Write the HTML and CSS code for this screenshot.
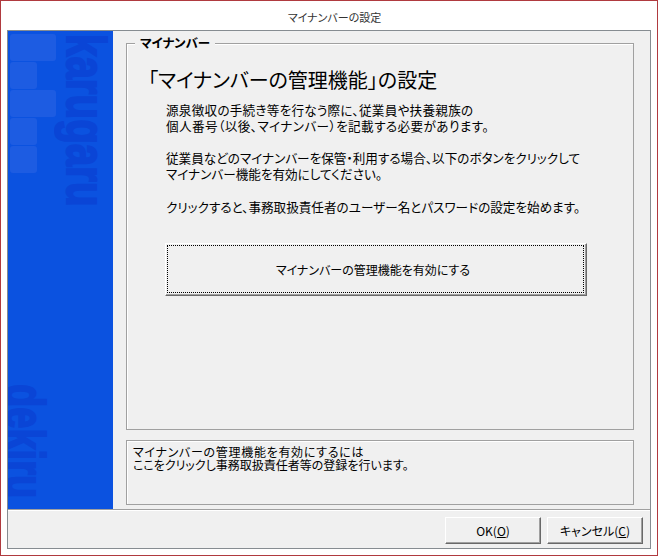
FILE: index.html
```html
<!DOCTYPE html>
<html lang="ja">
<head>
<meta charset="utf-8">
<title>マイナンバーの設定</title>
<link rel="stylesheet" href="styles.css">
</head>
<body>
<div class="window">
  <div class="titlebar">マイナンバーの設定</div>
  <div class="client">
    <div class="main">
      <aside class="sidebar">
        <div class="tiles">
          <span class="tile wide"></span>
          <span class="tile"></span>
          <span class="tile wide"></span>
          <span class="tile"></span>
          <span class="tile"></span>
        </div>
        <span class="mark mark-top">karugaru</span>
        <span class="mark mark-bottom">dekiru</span>
      </aside>
      <div class="content">
        <section class="group">
          <h2 class="legend">マイナンバー</h2>
          <h1 class="heading">「マイナンバーの管理機能」の設定</h1>
          <div class="body-text">
            <p class="loose"><span class="loose-a">源泉徴収の手続き等を行なう際に、従業員や扶養親族の</span><br><span class="loose-b">個人番号（以後、マイナンバー）を記載する必要があります。</span></p>
            <p>従業員などのマイナンバーを保管・利用する場合、以下のボタンをクリックして<br>マイナンバー機能を有効にしてください。</p>
            <p>クリックすると、事務取扱責任者のユーザー名とパスワードの設定を始めます。</p>
          </div>
          <button class="btn btn-main" type="button"><span class="focus">マイナンバーの管理機能を有効にする</span></button>
        </section>
        <section class="hint"><span class="hint-first">マイナンバーの管理機能を有効にするには</span><br>ここをクリックし事務取扱責任者等の登録を行います。</section>
      </div>
    </div>
    <div class="footer">
      <button class="btn btn-ok" type="button">OK(<u>O</u>)</button>
      <button class="btn btn-cancel" type="button">キャンセル(<u>C</u>)</button>
    </div>
  </div>
</div>
</body>
</html>
```
FILE: styles.css
```css
* { box-sizing: border-box; }
html, body { margin: 0; padding: 0; }
body {
  width: 658px;
  height: 556px;
  overflow: hidden;
  font-family: "Noto Sans CJK JP", "Liberation Sans", sans-serif;
  font-size: 12px;
  font-feature-settings: "palt";
  color: #000;
  background: #fff;
}
.window {
  width: 658px;
  height: 556px;
  border: 1px solid #b03a3f;
  display: flex;
  flex-direction: column;
  background: #fff;
}
.titlebar {
  height: 29px;
  flex: none;
  display: flex;
  align-items: center;
  justify-content: center;
  padding: 3px 0 0 11px;
  font-size: 11px;
  color: #333;
}
.client {
  flex: 1;
  margin: 0 6px 6px;
  border: 1px solid #868c91;
  background: #f0f0f0;
  display: flex;
  flex-direction: column;
}
.main {
  height: 479px;
  flex: none;
  display: flex;
  border-bottom: 1px solid #a0a0a0;
  box-shadow: 0 1px 0 #fff;
}
.sidebar {
  width: 105px;
  flex: none;
  position: relative;
  overflow: hidden;
  background: #0b52e0;
  padding: 3px 0 0 2px;
}
.tiles { display: flex; flex-direction: column; gap: 1px; }
.tile {
  display: block;
  width: 27px;
  height: 27px;
  border-radius: 3px;
  background: #1d5ce2;
}
.tile.wide { width: 46px; }
.mark {
  position: absolute;
  writing-mode: vertical-rl;
  font-family: "Liberation Sans", sans-serif;
  font-feature-settings: normal;
  font-size: 56px;
  font-weight: 700;
  color: #0a45d6;
  -webkit-text-stroke: 2px #0a45d6;
  line-height: 56px;
  white-space: nowrap;
  transform-origin: 0 0;
  transform: scaleY(0.72);
}
.mark-top { left: 50px; top: 3px; }
.mark-bottom { left: -11px; top: 353px; transform: scaleY(0.68); }
.content {
  flex: 1;
  padding: 12px 16px 4px 13px;
  display: flex;
  flex-direction: column;
  gap: 10px;
}
.group {
  position: relative;
  height: 387px;
  flex: none;
  border: 1px solid #a0a0a0;
  box-shadow: inset 1px 1px 0 #fff;
  padding: 24px 0 0 13px;
}
.legend {
  position: absolute;
  left: 8px;
  top: -9px;
  margin: 0;
  padding: 0 5px;
  background: #f0f0f0;
  font-size: 12.5px;
  line-height: 16px;
  font-weight: 700;
}
.heading {
  margin: 0 0 10px 8px;
  font-size: 20px;
  line-height: 24px;
  font-weight: 400;
  white-space: nowrap;
}
.body-text { padding-left: 26px; line-height: 16px; font-size: 12.6px; }
.body-text p { margin: 0 0 16px; white-space: nowrap; }
.body-text p:nth-child(2) { margin-bottom: 17px; }
.loose-a { letter-spacing: 0.25px; }
.loose-b { letter-spacing: 0.4px; }
.btn {
  font: inherit;
  font-feature-settings: "palt";
  color: #000;
  background: #f0f0f0;
  border: 1px solid;
  border-color: #fff #696969 #696969 #fff;
  box-shadow: inset -1px -1px 0 #a0a0a0;
  padding: 0;
}
.btn-main {
  display: block;
  width: 422px;
  height: 53px;
  margin: 28px 0 0 25px;
  padding: 1px 2px 2px 1px;
}
.focus {
  display: flex;
  width: 100%;
  height: 100%;
  align-items: center;
  justify-content: center;
  border: 1px dotted #000;
  padding-right: 5px;
}
.hint {
  flex: 1;
  border: 1px solid #a0a0a0;
  box-shadow: inset 1px 1px 0 #fff;
  padding: 4px 6px;
  line-height: 13px;
  font-size: 12px;
}
.hint-first { letter-spacing: 0.7px; }
.footer {
  flex: 1;
  display: flex;
  justify-content: flex-end;
  align-items: flex-start;
  gap: 6px;
  padding: 7px 7px 0 0;
}
.btn-ok, .btn-cancel { height: 27px; width: 96px; }
```
